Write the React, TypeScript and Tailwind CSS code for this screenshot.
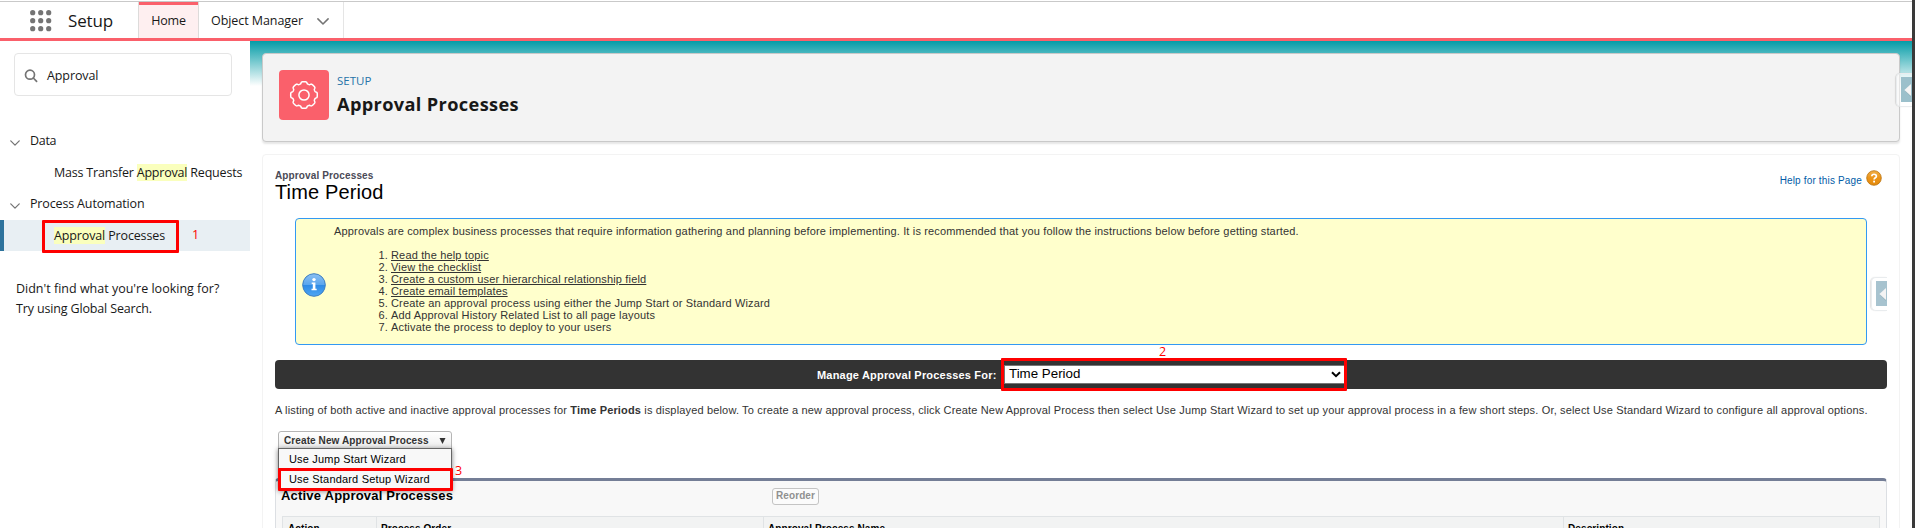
import type { ReactNode } from "react";

function Chevron({ className }: { className: string }) {
  return (
    <svg viewBox="0 0 12 7" className={className} fill="none" stroke="#747474" strokeWidth="1.5" strokeLinecap="round" strokeLinejoin="round">
      <path d="M0.9 0.9 L6 6 L11.1 0.9" />
    </svg>
  );
}

function Mark({ children, className = "" }: { children: ReactNode; className?: string }) {
  return <span className={`inline-block h-[17px] bg-[#faffbd] leading-[17px] ${className}`}>{children}</span>;
}

function HelpTab({ className, tint }: { className: string; tint: string }) {
  return (
    <div className={`absolute z-10 h-[34px] w-[16px] rounded-l-[5px] border-y border-l border-[#e9ecee] bg-white/50 pt-[3px] pl-[4px] shadow-[-1px_0_1px_rgba(0,0,0,0.12)] ${className}`}>
      <svg viewBox="0 0 11 25" className="block h-[25px] w-[11px]">
        <rect width="11" height="25" fill={tint} />
        <path d="M10 8 L4 14 L10 20" fill="#8aa3ae" opacity="0.6" />
        <path d="M10 7 L3.4 13 L10 19 Z" fill="#f4f4f4" />
      </svg>
    </div>
  );
}

function GearIcon() {
  const points: string[] = [];
  for (let i = 0; i <= 160; i++) {
    const a = (i / 160) * Math.PI * 2;
    const r = 12.4 + 0.9 * Math.tanh(3 * (Math.cos(a * 8) + 0.35));
    points.push(`${(25 + r * Math.sin(a)).toFixed(2)},${(25 - r * Math.cos(a)).toFixed(2)}`);
  }
  return (
    <svg viewBox="0 0 50 50" className="size-[50px] shrink-0 rounded-[4px] bg-[#fa606b]" fill="none" stroke="#fff" strokeWidth="1.5" strokeLinejoin="round">
      <polygon points={points.join(" ")} />
      <circle cx="25" cy="25" r="5.1" />
    </svg>
  );
}

function InfoIcon() {
  return (
    <svg viewBox="0 0 24 24" className="mt-[6px] size-[24px] shrink-0">
      <defs>
        <linearGradient id="info" x1="0" y1="0" x2="0" y2="1">
          <stop offset="0" stopColor="#8cc0f2" />
          <stop offset="0.48" stopColor="#5ba6ee" />
          <stop offset="0.52" stopColor="#2f8be6" />
          <stop offset="1" stopColor="#4fa6f3" />
        </linearGradient>
      </defs>
      <circle cx="12" cy="12" r="11.3" fill="url(#info)" stroke="#3f7fc0" strokeWidth="1" />
      <circle cx="12" cy="6.6" r="1.7" fill="#fff" />
      <path d="M9.7 9.5 H13.4 V15.7 H14.7 V17.2 H9.5 V15.7 H10.8 V11 H9.7 Z" fill="#fff" />
    </svg>
  );
}

function HelpIcon() {
  return (
    <svg viewBox="0 0 16 16" className="mt-px size-[16px]">
      <defs>
        <linearGradient id="help" x1="0" y1="0" x2="0" y2="1">
          <stop offset="0" stopColor="#f0b04a" />
          <stop offset="0.5" stopColor="#ec9417" />
          <stop offset="1" stopColor="#e38a0c" />
        </linearGradient>
      </defs>
      <circle cx="8" cy="8" r="7.3" fill="url(#help)" stroke="#b9720f" strokeWidth="0.8" />
      <path d="M5.8 6.3 C5.8 3.6 10.4 3.6 10.4 6.2 C10.4 7.8 8.1 7.8 8.1 9.6" fill="none" stroke="#fff" strokeWidth="1.7" />
      <rect x="7.2" y="10.7" width="1.8" height="1.8" fill="#fff" />
    </svg>
  );
}

const steps: { text: string; link?: boolean }[] = [
  { text: "Read the help topic", link: true },
  { text: "View the checklist", link: true },
  { text: "Create a custom user hierarchical relationship field", link: true },
  { text: "Create email templates", link: true },
  { text: "Create an approval process using either the Jump Start or Standard Wizard" },
  { text: "Add Approval History Related List to all page layouts" },
  { text: "Activate the process to deploy to your users" },
];

function Header() {
  return (
    <header className="flex h-[41px] shrink-0 items-stretch border-b-[3px] border-[#fa606b] pt-px">
      <div className="flex grow border-t border-[#c9c9c9]">
        <svg viewBox="0 0 22 22" className="mt-[8px] ml-[30px] size-[22px] shrink-0" fill="#747474">
          {[2.7, 10.7, 18.7].map((y) => [2.7, 10.7, 18.7].map((x) => <circle key={`${x}-${y}`} cx={x} cy={y} r="2.6" />))}
        </svg>
        <div className="ml-[16px] w-[70px] shrink-0 text-[17px] leading-[37px] tracking-[-0.15px]">Setup</div>
        <div className="w-[61px] shrink-0 border-x border-[#dddbda] bg-[#feeff0] text-center leading-[37px] tracking-[-0.2px] shadow-[inset_0_3px_0_#fa606b]">Home</div>
        <div className="flex w-[145px] shrink-0 items-center border-r border-[#e5e5e5] pl-[12px]">
          <span className="w-[106px] leading-[37px] tracking-[-0.07px]">Object Manager</span>
          <Chevron className="mt-[3px] h-[7px] w-[12px]" />
        </div>
      </div>
    </header>
  );
}

function Sidebar() {
  return (
    <aside className="w-[250px] shrink-0 pt-[12px] whitespace-nowrap">
      <div className="ml-[14px] flex h-[43px] w-[218px] items-center rounded-[4px] border border-[#e5e5e5] pl-[9px]">
        <svg viewBox="0 0 14 14" className="mt-[3px] size-[14px]" fill="none" stroke="#747474" strokeWidth="1.7" strokeLinecap="round">
          <circle cx="6" cy="5.7" r="4.5" />
          <path d="M9.3 9 L12.6 12.4" />
        </svg>
        <span className="mt-[3px] ml-[9px] tracking-[-0.1px]">Approval</span>
      </div>
      <div className="mt-[31px] flex h-[28px] items-center pl-[10px]">
        <Chevron className="mt-[3px] h-[6px] w-[10px]" />
        <span className="ml-[10px] tracking-[-0.3px]">Data</span>
      </div>
      <div className="mt-[2px] h-[31px] pl-[54px] leading-[31px] tracking-[-0.2px]">
        Mass Transfer <Mark>Approval</Mark> Requests
      </div>
      <div className="flex h-[32px] items-center pl-[10px]">
        <Chevron className="mt-[3px] h-[6px] w-[10px]" />
        <span className="ml-[10px] tracking-[-0.15px]">Process Automation</span>
      </div>
      <div className="relative h-[31px] border-l-4 border-[#2e739c] bg-[#e8eff3] pl-[50px] leading-[31px] tracking-[-0.14px]">
        <Mark>Approval</Mark> Processes
        <div className="absolute top-0 left-[38px] h-[33px] w-[137px] rounded-[1px] border-[3px] border-[#fe0000]" />
        <span className="absolute top-[-1px] left-[188px] text-[#fe0000]">1</span>
      </div>
      <p className="mt-[28px] pl-[16px] leading-[20px]">
        Didn't find what you're looking for?
        <br />
        <span className="tracking-[-0.15px]">Try using Global Search.</span>
      </p>
    </aside>
  );
}

function CreateMenu() {
  return (
    <div className="relative ml-[3px] h-[17px] w-[174px]">
      <div className="flex h-[20px] items-center rounded-t-[3px] border border-[#b5b5b5] bg-linear-to-b from-white to-[#ececec] pb-px pl-[5px] text-[10px] font-bold text-[#333]">
        <span className="w-[155px] tracking-[0.1px]">Create New Approval Process</span>
        <svg viewBox="0 0 6 6" className="h-[6px] w-[7px]" fill="#333">
          <path d="M0 0 H6 L3 6 Z" />
        </svg>
      </div>
      <div className="absolute top-[17px] left-0 z-10 h-[42px] w-[174px] border border-[#666] bg-[#f8f8f8] pl-[10px] text-[11px] leading-[20px] tracking-[0.18px] text-black shadow-[0_1px_5px_rgba(0,0,0,0.5)]">
        <div className="h-[20px]">Use Jump Start Wizard</div>
        <div className="h-[20px]">Use Standard Setup Wizard</div>
        <div className="absolute top-[19px] left-[-1px] h-[23px] w-[175px] rounded-[1px] border-[3px] border-[#fe0000]" />
        <span className="absolute top-[12px] left-[176px] font-['Open_Sans',sans-serif] text-[12.5px] leading-[20px] text-[#fe0000]">3</span>
      </div>
    </div>
  );
}

function ActiveProcesses() {
  return (
    <section className="mt-[30px] h-[80px] rounded-t-[4px] border-x border-t-[3px] border-x-[#dcdfe3] border-t-[#747e96] bg-[#f8f8f8] px-[6px] text-black">
      <div className="flex h-[35px] items-center">
        <h2 className="-ml-px w-[491px] pb-[6px] text-[13px] font-bold tracking-[0.2px]">Active Approval Processes</h2>
        <button className="mb-[5px] h-[17px] w-[47px] rounded-[3px] border border-[#c4c4c4] bg-[#fbfbfb] pb-px text-[10px] leading-[14px] font-bold tracking-[0.1px] text-[#909090]">Reorder</button>
      </div>
      <div className="grid grid-cols-[93px_387px_800px_1fr] border border-[#e0e3e5] bg-[#f2f3f3] text-[10px] leading-[24px] font-bold tracking-[0.1px]">
        <div className="pl-[5px]">Action</div>
        <div className="border-l border-[#e0e3e5] pl-[4px]">Process Order</div>
        <div className="border-l border-[#e0e3e5] pl-[4px]">Approval Process Name</div>
        <div className="border-l border-[#e0e3e5] pl-[4px]">Description</div>
      </div>
    </section>
  );
}

function Content() {
  return (
    <div className="relative mt-[12px] h-[400px] rounded-t-[4px] border border-[#f3f3f3] bg-white pr-[12px] pl-[12px] font-['Liberation_Sans',sans-serif] text-[11px] text-[#333]">
      <HelpTab className="top-[122px] right-[12px]" tint="#a7c3cf" />
      <div className="flex h-[63px] justify-between pt-[14px]">
        <div>
          <div className="h-[13px] text-[10px] leading-[13px] font-bold tracking-[0.13px] text-[#4a4a56]">Approval Processes</div>
          <h1 className="text-[20px] leading-[20px] tracking-[0.13px] text-black">Time Period</h1>
        </div>
        <div className="flex h-[17px] items-start gap-[4px] pr-[5px] text-[#015ba7]">
          <span className="mt-[6px] text-[10px] leading-[12px] tracking-[0.16px]">Help for this Page</span>
          <HelpIcon />
        </div>
      </div>
      <div className="mr-[20px] ml-[20px] flex h-[127px] items-center rounded-[4px] border border-[#3399f3] bg-[#ffffcc] pl-[6px] leading-[12px] tracking-[0.16px]">
        <InfoIcon />
        <div className="ml-[8px] h-full pt-[6px]">
          <p>Approvals are complex business processes that require information gathering and planning before implementing. It is recommended that you follow the instructions below before getting started.</p>
          <ol className="mt-[12px]">
            {steps.map((step, i) => (
              <li key={step.text} className="flex">
                <span className="w-[57px] shrink-0 pr-[3px] text-right">{i + 1}.</span>
                <span className={step.link ? "underline underline-offset-1" : ""}>{step.text}</span>
              </li>
            ))}
          </ol>
        </div>
      </div>
      <div className="relative mt-[15px] flex h-[29px] items-center rounded-[4px] bg-[#333] pl-[542px]">
        <span className="mt-px w-[187px] font-bold tracking-[0.19px] text-white">Manage Approval Processes For:</span>
        <div className="flex h-[19px] w-[341px] items-center justify-between border border-[#767676] bg-white pr-[3px] pb-px pl-[4px] text-[13.33px] text-black">
          <span>Time Period</span>
          <svg viewBox="0 0 10 7" className="h-[7px] w-[10px]" fill="none" stroke="#000" strokeWidth="2">
            <path d="M1 1.2 L5 5.2 L9 1.2" />
          </svg>
        </div>
        <div className="absolute top-[-2px] left-[726px] h-[33px] w-[346px] rounded-[1px] border-[3px] border-[#fe0000]" />
        <span className="absolute top-[-17px] left-[884px] font-['Open_Sans',sans-serif] text-[12.5px] leading-[18px] text-[#fe0000]">2</span>
      </div>
      <p className="mt-[15px] mb-[15px] leading-[12px] tracking-[0.16px] whitespace-nowrap">
        A listing of both active and inactive approval processes for <b>Time Periods</b> is displayed below. To create a new approval process, click Create New Approval Process then select Use Jump Start Wizard to set up your approval process in a few short steps. Or, select Use Standard Wizard to configure all approval options.
      </p>
      <CreateMenu />
      <ActiveProcesses />
    </div>
  );
}

export default function App() {
  return (
    <div className="flex h-[528px] w-[1915px] overflow-hidden bg-white font-['Open_Sans',sans-serif] text-[12.5px] text-[#181818]">
      <div className="flex w-[1912px] shrink-0 flex-col overflow-hidden">
        <Header />
        <div className="flex min-h-0 grow">
          <Sidebar />
          <main className="relative grow overflow-hidden bg-[linear-gradient(#049ca7,#ffffff_45px)] pt-[12px] pr-[12px] pl-[12px]">
            <HelpTab className="top-[32px] right-0" tint="#9bc0cb" />
            <div className="flex h-[89px] gap-[8px] rounded-[4px] border border-[#c9c9c9] bg-[#f3f3f3] pt-[16px] pl-[16px] shadow-[0_2px_2px_rgba(0,0,0,0.1)]">
              <GearIcon />
              <div>
                <div className="h-[20px] pt-px text-[11.5px] leading-[20px] text-[#2574a9]">SETUP</div>
                <h1 className="text-[18.2px] leading-[29px] font-bold tracking-[0.35px]">Approval Processes</h1>
              </div>
            </div>
            <Content />
          </main>
        </div>
      </div>
      <div className="grow bg-[#3a3a3a]" />
    </div>
  );
}
